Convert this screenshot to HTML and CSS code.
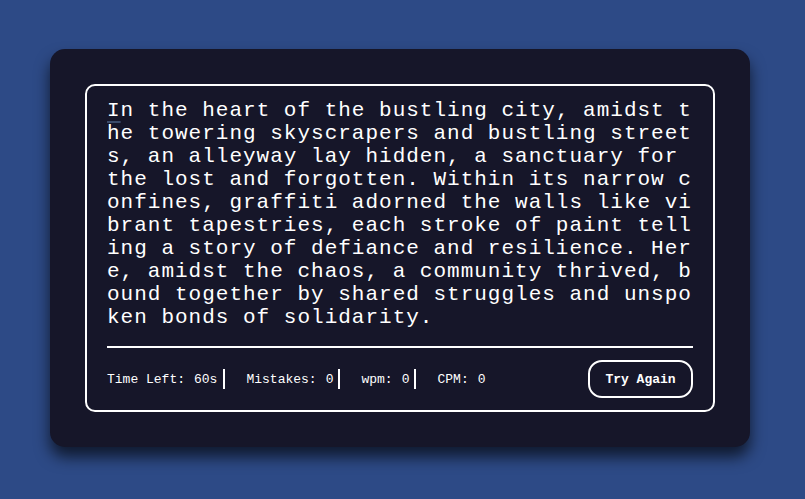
FILE: index.html
```html
<!DOCTYPE html>
<html lang="en">
<head>
<meta charset="utf-8">
<title>Typing Test</title>
<link rel="stylesheet" href="styles.css">
</head>
<body>
  <div class="wrapper">
    <div class="content-box">
      <div class="typing-text">
        <p><span class="active">I</span>n the heart of the bustling city, amidst the towering skyscrapers and bustling streets, an alleyway lay hidden, a sanctuary for the lost and forgotten. Within its narrow confines, graffiti adorned the walls like vibrant tapestries, each stroke of paint telling a story of defiance and resilience. Here, amidst the chaos, a community thrived, bound together by shared struggles and unspoken bonds of solidarity.</p>
      </div>
      <div class="content">
        <ul class="result-details">
          <li class="time">Time Left:<span>60s</span></li>
          <li class="mistake">Mistakes:<span>0</span></li>
          <li class="wpm">wpm:<span>0</span></li>
          <li class="cpm">CPM:<span>0</span></li>
        </ul>
        <button class="btn">Try Again</button>
      </div>
    </div>
  </div>
</body>
</html>
```
FILE: styles.css
```css
* {
  box-sizing: border-box;
}

html, body {
  margin: 0;
}

body {
  min-height: 100vh;
  background: #2d4a86;
  padding: 49px 0 0 50px;
  font-family: "Liberation Mono", monospace;
}

.wrapper {
  width: 700px;
  padding: 35px;
  border-radius: 15px;
  background: #161629;
  box-shadow: 0 10px 15px rgba(0, 0, 0, 0.65);
}

.content-box {
  border: 2px solid #ffffff;
  border-radius: 10px;
  padding: 13px 20px 0;
}

.typing-text p {
  margin: 0;
  color: #ffffff;
  font-family: "Liberation Mono", monospace;
  font-size: 21px;
  line-height: 23px;
  letter-spacing: 1px;
  word-break: break-all;
}

.typing-text .active {
  text-decoration: underline;
  text-decoration-color: #3b4a69;
  text-decoration-thickness: 2px;
  text-underline-offset: 5px;
}

.content {
  margin-top: 17px;
  border-top: 2px solid #ffffff;
  padding: 12px 0;
  display: flex;
  align-items: center;
  justify-content: space-between;
}

.result-details {
  display: flex;
  margin: 0;
  padding: 0;
  list-style: none;
}

.result-details li {
  display: flex;
  align-items: center;
  height: 20px;
  padding: 0 5px 0 21px;
  border-right: 2px solid #ffffff;
  color: #ffffff;
  font-size: 13px;
}

.result-details li:first-child {
  padding-left: 0;
  padding-right: 6px;
}

.result-details li:last-child {
  border-right: none;
}

.result-details li span {
  margin-left: 9px;
}

.btn {
  width: 105px;
  height: 38px;
  padding: 0;
  border: 2px solid #ffffff;
  border-radius: 14px;
  background: transparent;
  color: #ffffff;
  font-family: "Liberation Mono", monospace;
  font-size: 13px;
  font-weight: bold;
  cursor: pointer;
}
```
